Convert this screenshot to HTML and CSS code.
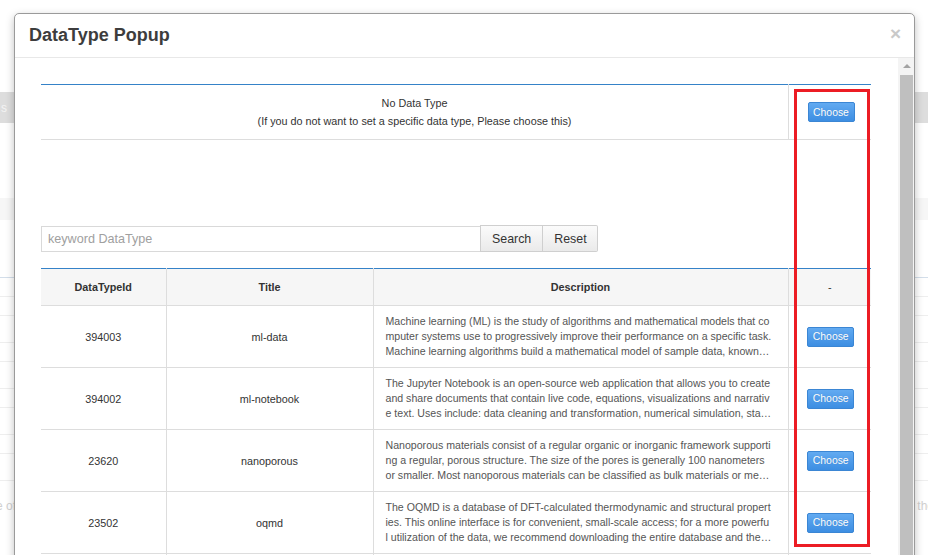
FILE: index.html
```html
<!DOCTYPE html>
<html>
<head>
<meta charset="utf-8">
<link rel="stylesheet" href="styles.css">
</head>
<body>
<div class="page">
  <div class="bar"><span class="bar-text">s</span></div>
  <div class="band"></div>
  <div class="list">
    <div class="lr s"></div><div class="lr s"></div><div class="lr l"></div><div class="lr s"></div><div class="lr l"></div><div class="lr s"></div><div class="lr l"></div><div class="lr s"></div><div class="lr l"></div>
  </div>
  <div class="bg-text"><span>e of</span><span>the</span></div>
</div>

<div class="modal">
  <div class="modal-header">
    <h4 class="modal-title">DataType Popup</h4>
    <span class="close">×</span>
  </div>
  <div class="modal-body">
    <div class="content">
      <table class="tbl tbl-none">
        <tr>
          <td class="none-cell">No Data Type<br>(If you do not want to set a specific data type, Please choose this)</td>
          <td class="act"><button class="choose">Choose</button></td>
        </tr>
      </table>

      <div class="search">
        <input class="kw" type="text" placeholder="keyword DataType">
        <button class="sbtn">Search</button><button class="sbtn last">Reset</button>
      </div>

      <table class="tbl tbl-list">
        <colgroup><col class="c1"><col class="c2"><col class="c3"><col class="c4"></colgroup>
        <thead>
          <tr><th>DataTypeId</th><th>Title</th><th>Description</th><th class="dash">-</th></tr>
        </thead>
        <tbody>
          <tr>
            <td class="ctr">394003</td><td class="ctr">ml-data</td>
            <td><div class="desc">Machine learning (ML) is the study of algorithms and mathematical models that computer systems use to progressively improve their performance on a specific task. Machine learning algorithms build a mathematical model of sample data, known as "training data", in order to make predictions or decisions without being explicitly programmed to perform the task.</div></td>
            <td class="act"><button class="choose">Choose</button></td>
          </tr>
          <tr>
            <td class="ctr">394002</td><td class="ctr">ml-notebook</td>
            <td><div class="desc">The Jupyter Notebook is an open-source web application that allows you to create and share documents that contain live code, equations, visualizations and narrative text. Uses include: data cleaning and transformation, numerical simulation, statistical modeling, data visualization, machine learning, and much more.</div></td>
            <td class="act"><button class="choose">Choose</button></td>
          </tr>
          <tr>
            <td class="ctr">23620</td><td class="ctr">nanoporous</td>
            <td><div class="desc">Nanoporous materials consist of a regular organic or inorganic framework supporting a regular, porous structure. The size of the pores is generally 100 nanometers or smaller. Most nanoporous materials can be classified as bulk materials or membranes.</div></td>
            <td class="act"><button class="choose">Choose</button></td>
          </tr>
          <tr>
            <td class="ctr">23502</td><td class="ctr">oqmd</td>
            <td><div class="desc">The OQMD is a database of DFT-calculated thermodynamic and structural properties. This online interface is for convenient, small-scale access; for a more powerful utilization of the data, we recommend downloading the entire database and the API.</div></td>
            <td class="act"><button class="choose">Choose</button></td>
          </tr>
          <tr>
            <td class="ctr">23501</td><td class="ctr">oqmd-data</td>
            <td><div class="desc">The OQMD data.</div></td>
            <td class="act"><button class="choose">Choose</button></td>
          </tr>
        </tbody>
      </table>
    </div>
    <div class="scrollbar">
      <div class="arrow"></div>
      <div class="thumb"></div>
    </div>
  </div>
</div>

<div class="highlight"></div>
</body>
</html>
```

FILE: styles.css
```css
html, body {
  margin: 0;
  padding: 0;
  height: 555px;
  overflow: hidden;
  background: #fff;
  font-family: "Liberation Sans", Arial, sans-serif;
}

/* background page */
.page {
  padding-top: 92px;
  display: flex;
  flex-direction: column;
}
.bar {
  height: 31px;
  background: #dddddd;
  display: flex;
  align-items: center;
}
.bar-text {
  color: #f4f4f4;
  font-size: 12px;
  padding-left: 1px;
}
.band {
  margin-top: 75px;
  height: 22px;
  background: #f6f6f6;
}
.list {
  margin-top: 57px;
  border-top: 1px solid #d3deea;
  display: flex;
  flex-direction: column;
}
.lr {
  border-bottom: 1px solid #eeeeee;
}
.lr.s { height: 18px; }
.lr.l { height: 26px; }
.bg-text {
  margin-top: 18px;
  display: flex;
  justify-content: space-between;
  color: #d0d0d0;
  font-size: 12px;
}
.bg-text span:first-child { margin-left: -4px; }
.bg-text span:last-child { margin-right: -6px; }

/* modal */
.modal {
  position: absolute;
  left: 14px;
  top: 13px;
  width: 899px;
  height: 600px;
  background: #fff;
  border: 1px solid #9a9a9a;
  border-radius: 5px;
  box-shadow: 0 3px 9px rgba(0, 0, 0, 0.25);
  overflow: hidden;
}
.modal-header {
  height: 43px;
  border-bottom: 1px solid #e8e8e8;
  padding: 0 15px 0 14px;
  display: flex;
  align-items: center;
  justify-content: space-between;
}
.modal-title {
  margin: 0;
  font-size: 18px;
  font-weight: bold;
  color: #3d3d3d;
}
.close {
  font-size: 19px;
  font-weight: bold;
  color: #c9c9c9;
  margin-right: -2px;
  margin-top: -4px;
}
.modal-body {
  display: flex;
  height: 560px;
}
.content {
  flex: 1;
  padding: 26px 27px 0 26px;
}
.scrollbar {
  width: 16px;
  background: #f4f4f4;
  display: flex;
  flex-direction: column;
  align-items: flex-end;
}
.arrow {
  width: 0;
  height: 0;
  border-left: 4px solid transparent;
  border-right: 4px solid transparent;
  border-bottom: 4px solid #a3a3a3;
  margin: 6px 3px 7px 0;
}
.thumb {
  width: 13px;
  flex: 1;
  background: #bfbfbf;
  margin-right: 1px;
}

/* tables */
.tbl {
  width: 830px;
  border-collapse: collapse;
  border-top: 1px solid #3582c8;
  font-size: 10.8px;
  color: #333;
  table-layout: fixed;
}
.tbl td, .tbl th {
  border-bottom: 1px solid #dddddd;
  padding: 0;
}
.tbl td + td, .tbl th + th {
  border-left: 1px solid #dddddd;
}
.tbl-none td {
  height: 54px;
}
.none-cell {
  text-align: center;
  line-height: 18px;
}
.tbl-none .act {
  width: 82px;
}
.act {
  text-align: center;
  vertical-align: middle;
}
.choose {
  width: 47px;
  height: 20px;
  padding: 0;
  font-family: "Liberation Sans", Arial, sans-serif;
  font-size: 10.4px;
  color: #fff;
  background: linear-gradient(#62aaf1, #3d8ee2);
  border: 1px solid #3b86d4;
  border-radius: 2px;
  text-shadow: 0 0 1px rgba(0, 0, 0, 0.15);
  position: relative;
  left: 1px;
}

.search {
  margin-top: 86px;
  display: flex;
  height: 26px;
}
.kw {
  width: 439px;
  height: 26px;
  box-sizing: border-box;
  border: 1px solid #d9d9d9;
  border-right: none;
  margin: 0;
  padding: 0 6px;
  font-family: "Liberation Sans", Arial, sans-serif;
  font-size: 12.6px;
  color: #333;
  outline: none;
}
.kw::placeholder {
  color: #a0a0a0;
}
.sbtn {
  height: 27px;
  margin: -1px 0 0 0;
  padding: 0 11px;
  box-sizing: border-box;
  background: linear-gradient(#fbfbfb, #eaeaea);
  border: 1px solid #cfcfcf;
  font-family: "Liberation Sans", Arial, sans-serif;
  font-size: 12.4px;
  color: #333;
}
.sbtn.last {
  border-left: none;
  padding: 0 10px 0 11px;
  border-radius: 0 2px 2px 0;
}

.tbl-list {
  margin-top: 16px;
}
.c1 { width: 125px; }
.c2 { width: 207px; }
.c3 { width: 415px; }
.c4 { width: 83px; }
.tbl-list th {
  height: 36px;
  background: #f6f6f6;
  font-weight: bold;
  text-align: center;
  color: #333;
}
.tbl-list th.dash {
  font-weight: normal;
}
.tbl-list td {
  height: 61px;
  vertical-align: middle;
}
.ctr {
  text-align: center;
}
.desc {
  padding: 0 16px 0 12px;
  font-size: 10.6px;
  line-height: 15px;
  color: #555;
  word-break: break-all;
  display: -webkit-box;
  -webkit-box-orient: vertical;
  -webkit-line-clamp: 3;
  overflow: hidden;
}

/* annotation */
.highlight {
  position: absolute;
  left: 794px;
  top: 89px;
  width: 70px;
  height: 452px;
  border: 3px solid #ec1c24;
}
```
